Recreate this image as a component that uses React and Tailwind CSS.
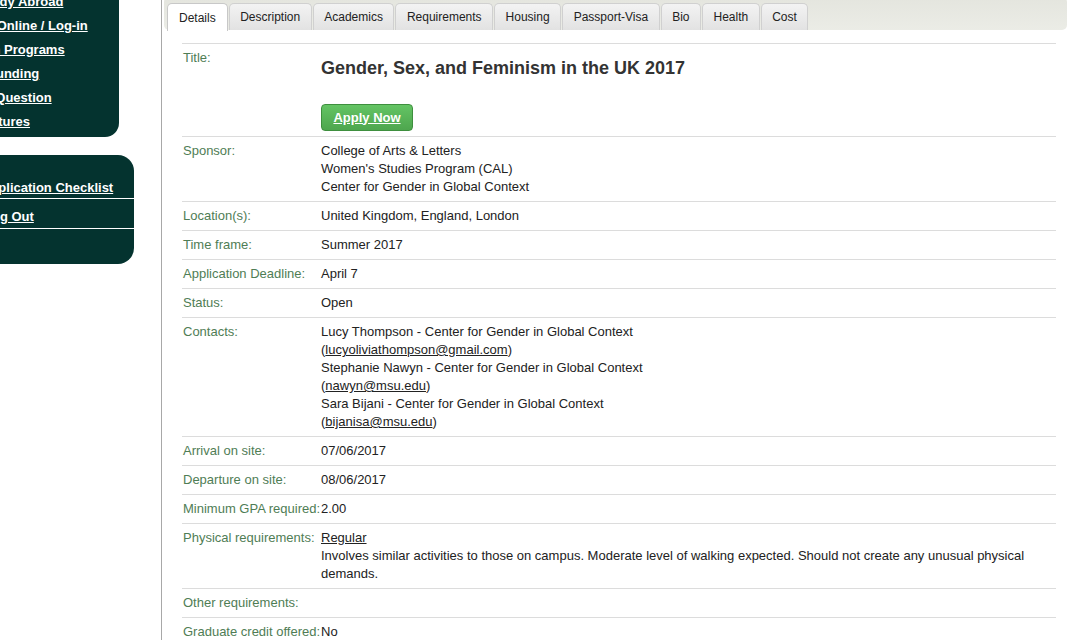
import React from "react";

const tabs = ["Details", "Description", "Academics", "Requirements", "Housing", "Passport-Visa", "Bio", "Health", "Cost"];

function Row({ label, children }) {
  return (
    <div className="flex border-t border-[#dcdcdc] pl-[1px] py-[5px] leading-[18px]">
      <div className="w-[138px] shrink-0 whitespace-nowrap text-[#4f7d55]">{label}</div>
      <div className="flex-1 text-[#222]">{children}</div>
    </div>
  );
}

export default function App() {
  const links = ["My Study Abroad", "Apply Online / Log-in", "Search Programs", "Find Funding", "Ask a Question", "My Pictures"];
  return (
    <div className="w-[1067px] h-[640px] overflow-hidden flex bg-white font-['Liberation_Sans',Arial,sans-serif]">
      {/* Sidebar */}
      <div className="w-[162px] shrink-0 border-r border-[#a8a8a8] flex flex-col">
        <div className="w-[119px] shrink-0 mt-[-10px] pb-[3px] bg-[#04332f] rounded-br-[14px] overflow-hidden">
          <div className="ml-[-43px]">
            {links.map((l) => (
              <a key={l} href="#" className="block whitespace-nowrap leading-[24px] text-[13px] font-bold text-white underline">
                {l}
              </a>
            ))}
          </div>
        </div>
        <div className="w-[134px] shrink-0 mt-[18px] pt-[14px] pb-[35px] bg-[#04332f] rounded-r-[16px] overflow-hidden">
          <div className="h-[30px] border-b border-white pt-[10px]">
            <a href="#" className="block ml-[-19px] whitespace-nowrap leading-[18px] text-[13px] font-bold text-white underline">
              Application Checklist
            </a>
          </div>
          <div className="h-[30px] border-b border-white pt-[9px]">
            <a href="#" className="block ml-[-16px] whitespace-nowrap leading-[18px] text-[13px] font-bold text-white underline">
              Log Out
            </a>
          </div>
        </div>
      </div>

      {/* Main panel */}
      <div className="flex-1 min-w-0 flex flex-col pl-[2px]">
        <div className="h-[33px] shrink-0 mt-[-3px] bg-gradient-to-b from-[#e4e5de] to-[#ebece6] rounded-[5px] flex items-end pl-[3px] gap-[1px]">
          {tabs.map((t, i) =>
            i === 0 ? (
              <div
                key={t}
                className="h-[28px] px-[11px] flex items-center bg-white border border-b-0 border-[#c8c8c8] rounded-t-[5px] text-[12px] text-[#222] mb-[-1px]"
              >
                {t}
              </div>
            ) : (
              <div
                key={t}
                className="h-[27px] px-[10.5px] flex items-center bg-gradient-to-b from-[#f3f3f3] to-[#e2e2e2] border border-b-0 border-[#d0d0d0] rounded-t-[5px] text-[12px] text-[#222]"
              >
                {t}
              </div>
            )
          )}
        </div>

        <div className="ml-[18px] mr-[11px] mt-[13px] text-[13px] shrink-0">
          <div className="flex border-t border-[#dcdcdc] pl-[1px] pt-[5px] pb-[5px] leading-[18px]">
            <div className="w-[138px] shrink-0 whitespace-nowrap text-[#4f7d55]">Title:</div>
            <div className="flex-1">
              <h2 className="mt-[8px] text-[18px] leading-[22px] font-bold text-[#333]">
                Gender, Sex, and Feminism in the UK 2017
              </h2>
              <a
                href="#"
                className="mt-[25px] w-[92px] h-[27px] flex items-center justify-center rounded-[4px] border border-[#3e8f3e] bg-gradient-to-b from-[#64c464] to-[#4ea64e] text-white font-bold text-[13px] underline"
              >
                Apply Now
              </a>
            </div>
          </div>
          <Row label="Sponsor:">
            <div>College of Arts &amp; Letters</div>
            <div>Women's Studies Program (CAL)</div>
            <div>Center for Gender in Global Context</div>
          </Row>
          <Row label="Location(s):">United Kingdom, England, London</Row>
          <Row label="Time frame:">Summer 2017</Row>
          <Row label="Application Deadline:">April 7</Row>
          <Row label="Status:">Open</Row>
          <Row label="Contacts:">
            <div>Lucy Thompson - Center for Gender in Global Context</div>
            <div>
              (<a href="#" className="underline">lucyoliviathompson@gmail.com</a>)
            </div>
            <div>Stephanie Nawyn - Center for Gender in Global Context</div>
            <div>
              (<a href="#" className="underline">nawyn@msu.edu</a>)
            </div>
            <div>Sara Bijani - Center for Gender in Global Context</div>
            <div>
              (<a href="#" className="underline">bijanisa@msu.edu</a>)
            </div>
          </Row>
          <Row label="Arrival on site:">07/06/2017</Row>
          <Row label="Departure on site:">08/06/2017</Row>
          <Row label="Minimum GPA required:">2.00</Row>
          <Row label="Physical requirements:">
            <div>
              <a href="#" className="underline">Regular</a>
            </div>
            <div>
              Involves similar activities to those on campus. Moderate level of walking expected. Should not create any unusual physical demands.
            </div>
          </Row>
          <Row label="Other requirements:"></Row>
          <Row label="Graduate credit offered:">No</Row>
        </div>
      </div>
    </div>
  );
}
